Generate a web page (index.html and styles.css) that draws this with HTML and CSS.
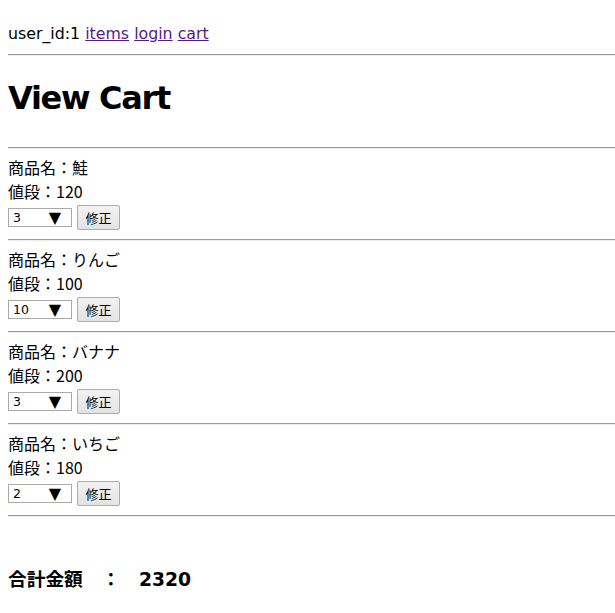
FILE: index.html
```html
<!DOCTYPE html>
<html lang="ja">
<head>
<meta charset="utf-8">
<title>View Cart</title>
<link rel="stylesheet" href="styles.css">
</head>
<body>
<p class="nav">user_id:1 <a href="#">items</a> <a href="#">login</a> <a href="#">cart</a></p>
<hr>
<h1 class="title">View Cart</h1>
<hr>
<div class="item">
  <div class="line">商品名：鮭</div>
  <div class="line">値段：120</div>
  <form class="controls">
    <span class="sel"><select><option>3</option></select></span>
    <button type="button" class="btn">修正</button>
  </form>
</div>
<hr>
<div class="item">
  <div class="line">商品名：りんご</div>
  <div class="line">値段：100</div>
  <form class="controls">
    <span class="sel"><select><option>10</option></select></span>
    <button type="button" class="btn">修正</button>
  </form>
</div>
<hr>
<div class="item">
  <div class="line">商品名：バナナ</div>
  <div class="line">値段：200</div>
  <form class="controls">
    <span class="sel"><select><option>3</option></select></span>
    <button type="button" class="btn">修正</button>
  </form>
</div>
<hr>
<div class="item">
  <div class="line">商品名：いちご</div>
  <div class="line">値段：180</div>
  <form class="controls">
    <span class="sel"><select><option>2</option></select></span>
    <button type="button" class="btn">修正</button>
  </form>
</div>
<hr>
<h3 class="total">合計金額　：　2320</h3>
</body>
</html>
```
FILE: styles.css
```css
html, body {
  background: #fff;
}
body {
  margin: 8px 0 0 8px;
  font-family: "DejaVu Sans", "Noto Sans CJK JP", sans-serif;
  font-size: 16px;
  line-height: 24px;
  color: #000;
}
.nav {
  margin: 14px 0 8px;
  font-size: 15.8px;
}
.nav a {
  color: #551a8b;
}
hr {
  margin: 0;
  height: 0;
  border: 0;
  border-top: 1px solid #9a9a9a;
  border-bottom: 1px solid #eeeeee;
}
.title {
  font-size: 32px;
  line-height: 40px;
  font-weight: bold;
  letter-spacing: -1.3px;
  margin: 22px 0 29px;
}
.item {
  padding: 6px 0 9px;
}
.line {
  font-family: "Noto Sans CJK JP", sans-serif;
}
.controls {
  margin: 2px 0 0;
  display: flex;
  align-items: center;
  gap: 5px;
  height: 25px;
}
.sel {
  position: relative;
  display: flex;
  width: 64px;
  height: 19px;
}
.sel select {
  appearance: none;
  -webkit-appearance: none;
  display: block;
  width: 64px;
  height: 19px;
  margin: 0;
  padding: 0 0 0 4px;
  border: 1px solid #a9a9a9;
  border-radius: 0;
  background: #fff;
  font-family: "DejaVu Sans", sans-serif;
  font-size: 12.5px;
  line-height: 17px;
  color: #000;
}
.sel::after {
  content: "▼";
  position: absolute;
  right: 11px;
  top: 0;
  font-family: "DejaVu Sans", sans-serif;
  font-size: 16px;
  line-height: 19px;
  pointer-events: none;
}
.btn {
  width: 43px;
  height: 25px;
  margin: 0;
  padding: 0;
  border: 1px solid #acacac;
  border-radius: 2px;
  background: linear-gradient(#f2f2f2, #e3e3e3);
  font-family: "Noto Sans CJK JP", sans-serif;
  font-size: 13px;
  color: #000;
}
.total {
  font-family: "DejaVu Sans", "Noto Sans CJK JP", sans-serif;
  font-size: 18.72px;
  line-height: 28px;
  font-weight: bold;
  margin: 49px 0 0;
}
```
